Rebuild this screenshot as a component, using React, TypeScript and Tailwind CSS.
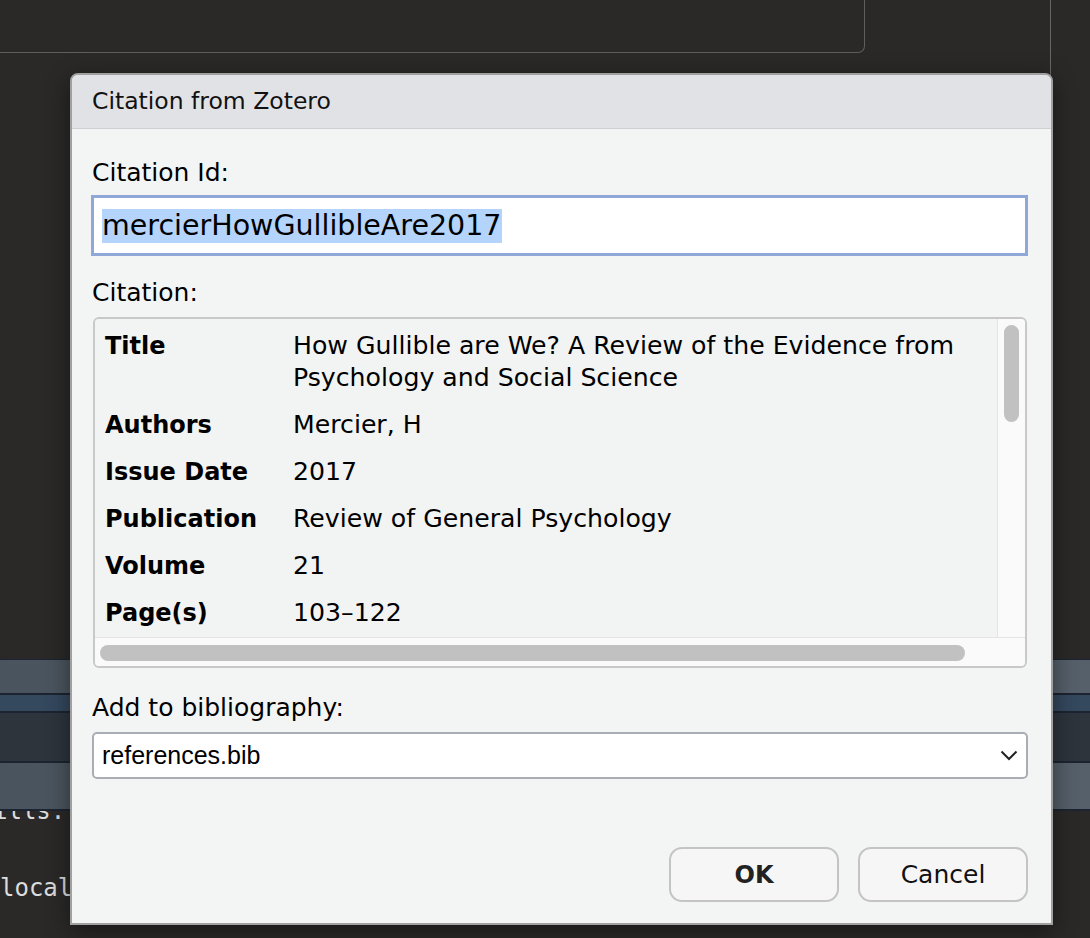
import React from "react";

const rows: [string, string][] = [
  ["Title", "How Gullible are We? A Review of the Evidence from Psychology and Social Science"],
  ["Authors", "Mercier, H"],
  ["Issue Date", "2017"],
  ["Publication", "Review of General Psychology"],
  ["Volume", "21"],
  ["Page(s)", "103–122"],
];

export default function App() {
  return (
    <div className="relative w-[1090px] h-[938px] overflow-hidden bg-[#2a2928] font-['DejaVu_Sans',sans-serif]">
      {/* background editor panes */}
      <div className="flex h-[659px]">
        <div className="w-[1051px] border-r border-[#666666]">
          <div className="ml-[-2px] w-[867px] h-[53px] border border-t-0 border-[#5e5e5e] rounded-br-[7px]" />
        </div>
      </div>
      <div className="h-[1px] bg-[#1b2430]" />
      <div className="h-[33px] bg-gradient-to-r from-[#4a545e] to-[#56606a]" />
      <div className="h-[2px] bg-[#1b2430]" />
      <div className="h-[16px] bg-[#34485e]" />
      <div className="h-[2px] bg-[#1b2430]" />
      <div className="h-[48px] bg-[#2d343c]" />
      <div className="h-[2px] bg-[#1b2430]" />
      <div className="h-[46px] bg-gradient-to-r from-[#4a545e] to-[#56606a]" />
      <div className="h-[2px] bg-[#1b2430]" />
      <div className="h-[12px] overflow-hidden">
        <div className="-mt-[15px] ml-[-7px] leading-[30px] text-[24px] text-[#dcdcdc] font-['DejaVu_Sans_Mono',monospace] whitespace-pre">
          ills:
        </div>
      </div>
      <div className="mt-[50px] leading-[30px] text-[24px] text-[#dcdcdc] font-['DejaVu_Sans_Mono',monospace] whitespace-pre">
        local
      </div>

      {/* dialog */}
      <div className="absolute left-[70px] top-[73px] w-[983px] h-[852px] border-2 border-[#a0a0a0] rounded-t-[8px] bg-[#f3f4f4] shadow-[0_6px_24px_rgba(0,0,0,0.45)] flex flex-col">
        <div className="h-[54px] shrink-0 flex items-center pl-[20px] bg-[#e1e2e6] border-b border-[#cfd0d4] rounded-t-[6px] text-[23.5px] text-[#111]">
          Citation from Zotero
        </div>
        <div className="pl-[20px] pr-[23px] flex flex-col">
          <div className="mt-[29px] text-[25px] leading-[30px] text-black">Citation Id:</div>
          <div className="mt-[7px] -ml-[1px] w-[937px] h-[61px] border-[3px] border-[#8fa8d9] bg-white flex items-center pl-[8px]">
            <span className="bg-[#b4d4fb] text-[28.5px] leading-[34px] text-black">mercierHowGullibleAre2017</span>
          </div>
          <div className="mt-[22px] text-[25px] leading-[30px] text-black">Citation:</div>
          <div className="mt-[9px] ml-[1px] w-[934px] h-[351px] border-2 border-[#c8c8c8] rounded-[6px] flex flex-col overflow-hidden">
            <div className="flex h-[318px]">
              <div className="flex-1 bg-[#f2f3f3] pt-[11px] pl-[10px]">
                <div className="grid grid-cols-[188px_1fr] gap-y-[15px] leading-[32px] text-black">
                  {rows.map(([k, v]) => (
                    <React.Fragment key={k}>
                      <div className="font-bold text-[24px]">{k}</div>
                      <div className="text-[25.2px] pr-[10px]">{v}</div>
                    </React.Fragment>
                  ))}
                </div>
              </div>
              <div className="w-[28px] bg-[#fafafa] border-l border-[#e4e4e4] flex justify-center">
                <div className="mt-[6px] w-[15px] h-[97px] rounded-full bg-[#c1c1c1]" />
              </div>
            </div>
            <div className="h-[29px] bg-[#fafafa] border-t border-[#e4e4e4]">
              <div className="ml-[5px] mt-[7px] w-[865px] h-[16px] rounded-full bg-[#c1c1c1]" />
            </div>
          </div>
          <div className="mt-[25px] text-[25px] leading-[30px] text-black">Add to bibliography:</div>
          <div className="mt-[9px] w-[936px] h-[47px] border-2 border-[#abadb5] rounded-[5px] bg-white flex items-center justify-between pl-[8px] pr-[8px]">
            <span className="font-['Liberation_Sans',Arial,sans-serif] text-[25px] text-black">references.bib</span>
            <svg width="18" height="11" viewBox="0 0 18 11" fill="none">
              <path d="M1.5 1.5 L9 9 L16.5 1.5" stroke="#222" strokeWidth="2" />
            </svg>
          </div>
          <div className="mt-[68px] flex justify-end gap-[19px]">
            <button className="w-[170px] h-[55px] rounded-[13px] border-2 border-[#c4c4c4] bg-[#f6f6f7] text-[24px] font-bold text-[#222]">
              OK
            </button>
            <button className="w-[170px] h-[55px] rounded-[13px] border-2 border-[#c4c4c4] bg-[#f6f6f7] text-[25px] text-[#111]">
              Cancel
            </button>
          </div>
        </div>
      </div>
    </div>
  );
}
